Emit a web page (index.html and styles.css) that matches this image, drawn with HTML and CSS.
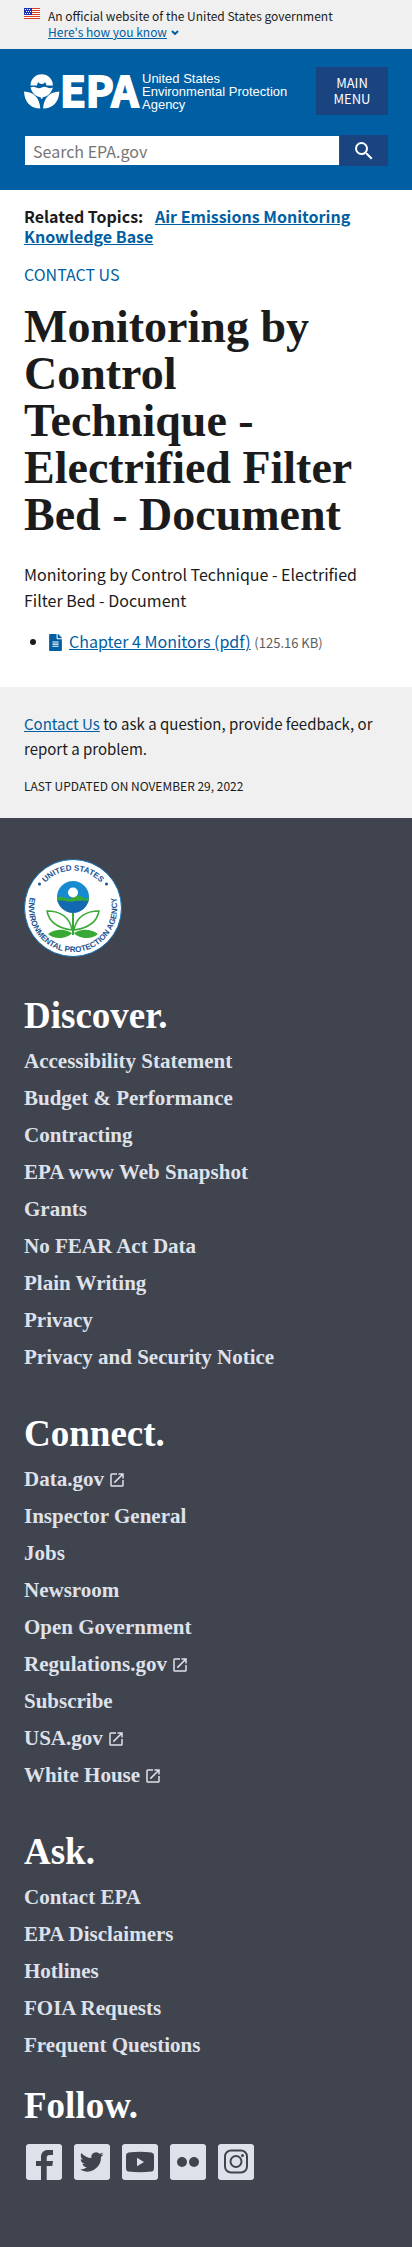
FILE: index.html
```html
<!DOCTYPE html>
<html lang="en">
<head>
<meta charset="utf-8">
<meta name="viewport" content="width=device-width, initial-scale=1">
<title>Monitoring by Control Technique - Electrified Filter Bed - Document | US EPA</title>
<link rel="stylesheet" href="styles.css">
</head>
<body>
<svg class="defs" aria-hidden="true">
  <symbol id="launch" viewBox="0 0 24 24"><path d="M19 19H5V5h7V3H5a2 2 0 0 0-2 2v14a2 2 0 0 0 2 2h14c1.100 0 2-.9 2-2v-7h-2v7zM14 3v2h3.590l-9.830 9.830 1.410 1.410L19 6.410V10h2V3h-7z"/></symbol>
</svg>

<section class="banner" aria-label="Official government website">
  <svg class="banner-flag" viewBox="0 0 16 11" aria-hidden="true">
    <path fill="#fff" d="M0 0h16v11H0z"/>
    <path stroke="#db3e1f" d="M0 .5h16M0 2.500h16M0 4.500h16M0 6.500h16M0 8.500h16M0 10.500h16"/>
    <path fill="#1e33b1" d="M0 0h8v7H0z"/>
    <path stroke="#fff" stroke-dasharray="1 1" d="M1 1.500h6M2 3.500h5M1 5.500h6"/>
  </svg>
  <div>
    <p class="banner-text">An official website of the United States government</p>
    <button class="banner-toggle" type="button"><span>Here's how you know</span><svg viewBox="0 0 8 5" aria-hidden="true"><path d="M1 1l3 3 3-3"/></svg></button>
  </div>
</section>

<header class="header">
  <div class="header-top">
    <a class="logo" href="#" aria-label="United States Environmental Protection Agency">
      <svg class="logo-mark" viewBox="0 0 114 36" aria-hidden="true">
        <path d="M6.500 12.500a11.200 11.200 0 0 1 22.400 0h-6.500a4.700 4.700 0 1 0-9.400 0z"/>
        <circle cx="17.700" cy="7.700" r="3.300"/>
        <path d="M6.500 14.500q2.800-1.300 5.600 0t5.600 0 5.600 0 5.600 0c-1.400 5.600-5.500 9.200-10.300 9.800v1.500h-1.800v-1.500C12 23.700 7.900 20.100 6.500 14.500z"/>
        <path d="M0 18.500c9.500.5 15.500 5.700 16.300 17C6 35.500.5 28.500 0 18.500zM35.400 18.500c-9.500.5-15.500 5.700-16.300 17 10.300 0 15.800-7 16.300-17z"/>
        <text class="logo-epa" x="36" y="34">EPA</text>
      </svg>
      <span class="logo-name">United States<br>Environmental Protection<br>Agency</span>
    </a>
    <button class="menu-button" type="button">Main Menu</button>
  </div>
  <form class="search" role="search">
    <input class="search-input" type="search" placeholder="Search EPA.gov" aria-label="Search EPA.gov">
    <button class="search-button" type="submit" aria-label="Search"><svg viewBox="0 0 24 24" aria-hidden="true"><path d="M15.500 14h-.79l-.28-.27A6.470 6.470 0 0 0 16 9.500 6.500 6.500 0 1 0 9.500 16c1.610 0 3.090-.59 4.230-1.570l.27.28v.79l5 4.990L20.490 19l-4.990-5zm-6 0C7.010 14 5 11.990 5 9.500S7.010 5 9.500 5 14 7.010 14 9.500 11.990 14 9.500 14z"/></svg></button>
  </form>
</header>

<main class="main">
  <p class="related">Related Topics: <a href="#">Air Emissions Monitoring Knowledge Base</a></p>
  <p class="contact"><a href="#">Contact Us</a></p>
  <h1 class="title">Monitoring by<br>Control<br>Technique -<br>Electrified Filter<br>Bed - Document</h1>
  <p class="summary">Monitoring by Control Technique - Electrified Filter Bed - Document</p>
  <ul class="files">
    <li><svg class="file-icon" viewBox="0 0 384 512" aria-hidden="true"><path d="M224 136V0H24C11 0 0 11 0 24v464c0 13 11 24 24 24h336c13 0 24-11 24-24V160H248c-13 0-24-11-24-24zm64 236c0 7-5 12-12 12H108c-7 0-12-5-12-12v-8c0-7 5-12 12-12h168c7 0 12 5 12 12zm0-64c0 7-5 12-12 12H108c-7 0-12-5-12-12v-8c0-7 5-12 12-12h168c7 0 12 5 12 12zm0-72v8c0 7-5 12-12 12H108c-7 0-12-5-12-12v-8c0-7 5-12 12-12h168c7 0 12 5 12 12zm96-114v6H256V0h6c6 0 12 3 17 7l98 98c4 5 7 11 7 17z"/></svg><a href="#">Chapter 4 Monitors (pdf)</a> <span class="file-size">(125.16 KB)</span></li>
  </ul>
</main>

<footer>
  <div class="page-info">
    <p class="feedback"><a href="#">Contact Us</a> to ask a question, provide feedback, or report a problem.</p>
    <p class="updated">Last updated on November 29, 2022</p>
  </div>
  <div class="footer">
    <svg class="seal" viewBox="0 0 98 98" role="img" aria-label="United States Environmental Protection Agency seal">
      <defs>
        <path id="arc-top" d="M11.500 49a37.500 37.500 0 0 1 75 0"/>
        <path id="arc-bottom" d="M13 23.300a44.200 44.200 0 1 0 72 0"/>
        <clipPath id="globe"><circle cx="49" cy="38" r="16"/></clipPath>
      </defs>
      <circle cx="49" cy="49" r="48.500" fill="#fff" stroke="#0e6eb4"/>
      <text class="seal-text"><textPath href="#arc-top" startOffset="50%">UNITED STATES</textPath></text>
      <text class="seal-text"><textPath href="#arc-bottom" startOffset="50%">ENVIRONMENTAL PROTECTION AGENCY</textPath></text>
      <circle cx="15.500" cy="25" r="1.500" fill="#1a5295"/><circle cx="82.500" cy="25" r="1.500" fill="#1a5295"/>
      <g clip-path="url(#globe)">
        <path fill="#168bd0" d="M32 21h34v22H32z"/>
        <path fill="#39a935" d="M32 38q5-1 9 1t9-1 8 0 8 0v5H32z"/>
        <path fill="#1269b0" d="M32 42q6-1 10 0t10 0 14 0v14H32z"/>
      </g>
      <circle cx="49" cy="33.500" r="5" fill="#fff"/>
      <path fill="#39a935" d="M48 54h2v22h-2zM24 75c8-6 18-5 24-1-5 6-18 7-24 1zM74 75c-8-6-18-5-24-1 5 6 18 7 24 1z"/>
      <path fill="#fff" stroke="#39a935" stroke-width="1.500" d="M48 71C46 58 36 52 23 52c2 11 10 17 25 19zM50 71c2-13 12-19 25-19-2 11-10 17-25 19z"/>
    </svg>

    <nav class="group" aria-labelledby="discover">
      <h2 id="discover">Discover.</h2>
      <ul>
        <li><a href="#">Accessibility Statement</a></li>
        <li><a href="#">Budget &amp; Performance</a></li>
        <li><a href="#">Contracting</a></li>
        <li><a href="#">EPA www Web Snapshot</a></li>
        <li><a href="#">Grants</a></li>
        <li><a href="#">No FEAR Act Data</a></li>
        <li><a href="#">Plain Writing</a></li>
        <li><a href="#">Privacy</a></li>
        <li><a href="#">Privacy and Security Notice</a></li>
      </ul>
    </nav>
    <nav class="group" aria-labelledby="connect">
      <h2 id="connect">Connect.</h2>
      <ul>
        <li><a href="#">Data.gov<svg aria-hidden="true"><use href="#launch"/></svg></a></li>
        <li><a href="#">Inspector General</a></li>
        <li><a href="#">Jobs</a></li>
        <li><a href="#">Newsroom</a></li>
        <li><a href="#">Open Government</a></li>
        <li><a href="#">Regulations.gov<svg aria-hidden="true"><use href="#launch"/></svg></a></li>
        <li><a href="#">Subscribe</a></li>
        <li><a href="#">USA.gov<svg aria-hidden="true"><use href="#launch"/></svg></a></li>
        <li><a href="#">White House<svg aria-hidden="true"><use href="#launch"/></svg></a></li>
      </ul>
    </nav>
    <nav class="group" aria-labelledby="ask">
      <h2 id="ask">Ask.</h2>
      <ul>
        <li><a href="#">Contact EPA</a></li>
        <li><a href="#">EPA Disclaimers</a></li>
        <li><a href="#">Hotlines</a></li>
        <li><a href="#">FOIA Requests</a></li>
        <li><a href="#">Frequent Questions</a></li>
      </ul>
    </nav>
    <section class="follow" aria-labelledby="follow">
      <h2 id="follow">Follow.</h2>
      <div class="social">
        <a href="#" aria-label="Facebook"><svg viewBox="0 0 36 36"><path d="M15 36V22h-5v-5h5v-3.500C15 8 18 6 22 6h5v5h-3c-2.500 0-3.300 1-3.300 3v3H27l-.7 5h-5.600v14z"/></svg></a>
        <a href="#" aria-label="Twitter"><svg viewBox="0 0 36 36"><path d="M29.500 10.300c-.9.400-1.800.7-2.800.8 1-.6 1.800-1.500 2.100-2.600-.9.500-2 1-3.100 1.200a4.900 4.900 0 0 0-8.300 4.400C13.400 13.900 9.800 12 7.400 9c-1.300 2.200-.7 5 1.500 6.500-.8 0-1.500-.2-2.200-.6 0 2.400 1.600 4.400 3.900 4.900-.7.200-1.500.2-2.200.1.600 1.900 2.400 3.300 4.600 3.400A9.800 9.800 0 0 1 5.700 25.300 13.800 13.800 0 0 0 27 13.100c1-.7 1.800-1.700 2.500-2.800z"/></svg></a>
        <a href="#" aria-label="YouTube"><svg viewBox="0 0 36 36"><path fill-rule="evenodd" d="M6.500 8.500Q18 7 29.500 8.500q2.500.5 2.500 3v13q0 2.500-2.500 3Q18 29 6.500 27.500q-2.500-.5-2.500-3v-13q0-2.500 2.500-3zM15 13.800v8.400l7-4.200z"/></svg></a>
        <a href="#" aria-label="Flickr"><svg viewBox="0 0 36 36"><circle cx="12" cy="18" r="5"/><circle cx="24" cy="18" r="5"/></svg></a>
        <a href="#" aria-label="Instagram"><svg viewBox="0 0 36 36"><g class="outline"><rect x="7" y="6.500" width="22" height="22" rx="6"/><circle cx="18" cy="17.500" r="5.500"/></g><circle cx="24.500" cy="11.500" r="1.500"/></svg></a>
      </div>
    </section>
  </div>
</footer>
</body>
</html>
```
FILE: styles.css
```css
:root {
  --sans: "Noto Sans CJK SC", "Noto Sans", sans-serif;
  --serif: "Liberation Serif", serif;
  --blue: #005ea2;
  --navy: #1a4480;
  --ink: #1b1b1b;
  --slate: #40444f;
  --pale: #dfe1ea;
}

*, *::before, *::after { box-sizing: border-box; }
body { margin: 0; background: #fff; color: var(--ink); font: 16px/26px var(--sans); }
p, h1, h2, ul { margin: 0; padding: 0; }
a { color: var(--blue); }
button, input { font-family: inherit; border: 0; border-radius: 0; }
svg { flex: none; }
.defs { display: none; }

.banner { display: flex; gap: 8px; padding: 8px 24px 9px; background: #f0f0f0; font-size: 12px; line-height: 16px; }
.banner-flag { width: 16px; height: 11px; }
.banner-toggle { display: flex; align-items: center; gap: 4px; padding: 0; background: none; color: var(--blue); font-size: 12px; line-height: 16px; }
.banner-toggle span { text-decoration: underline; }
.banner-toggle svg { width: 8px; height: 5px; fill: none; stroke: currentColor; stroke-width: 2; }

.header { padding: 18px 24px 24px; background: var(--blue); }
.header-top { display: flex; justify-content: space-between; align-items: center; margin-bottom: 20px; }
.logo { display: flex; align-items: center; gap: 4px; color: #fff; text-decoration: none; }
.logo-mark { width: 114px; height: 36px; overflow: visible; fill: #fff; }
.logo-epa { font: 700 42px "Noto Sans CJK SC", sans-serif; stroke: #fff; stroke-width: 2; }
.logo-name { font: 13px/13px "Liberation Sans", sans-serif; white-space: nowrap; }
.menu-button { width: 72px; padding: 8px 16px; background: var(--navy); color: #fff; font-size: 13px; line-height: 16px; text-transform: uppercase; }
.search { display: flex; }
.search-input { flex: 1; min-width: 0; height: 31px; padding: 0 8px; border: 1px solid var(--blue); background: #fff; color: var(--ink); font-size: 16px; }
.search-input::placeholder { color: #757575; opacity: 1; }
.search-button { display: grid; place-items: center; width: 48px; padding: 0; background: var(--navy); }
.search-button svg { width: 24px; height: 24px; fill: #fff; }

.main { padding: 16px 24px 33px; }
.related { font-weight: bold; line-height: 20px; }
.related a { margin-left: 8px; }
.contact { margin-top: 15px; }
.contact a { text-decoration: none; text-transform: uppercase; }
.title { margin-top: 16px; font: bold 46px/47px var(--serif); }
.summary { margin-top: 23px; }
.files { margin-top: 15px; padding-left: 25px; }
.file-icon { width: 13px; height: 17px; margin-right: 7px; vertical-align: -3px; fill: var(--blue); }
.file-size { color: #5c5c5c; font-size: 13px; line-height: 1; }

.page-info { padding: 24px 24px 20px; background: #f0f0f0; font-size: 15px; }
.feedback { line-height: 25px; }
.updated { margin-top: 12px; font-size: 12px; line-height: 25px; text-transform: uppercase; }

.footer { padding: 41px 24px 67px; background: var(--slate); color: #fff; font-family: var(--serif); }
.seal { display: block; width: 98px; height: 98px; margin-bottom: 39px; }
.seal-text { fill: #1a5295; font: bold 8px "Liberation Sans", sans-serif; text-anchor: middle; }
.footer h2 { font-size: 37px; line-height: 40px; }
.group { margin-bottom: 38px; }
.group ul { margin-top: 7px; list-style: none; }
.group a { display: flex; align-items: center; gap: 4px; color: var(--pale); font-size: 21px; font-weight: bold; line-height: 37px; text-decoration: none; }
.group svg { width: 18px; height: 18px; fill: currentColor; }
.group:nth-last-child(2) { margin-bottom: 22px; }
.social { display: flex; gap: 12px; margin: 18px 2px 0; }
.social a { width: 36px; height: 36px; border-radius: 3px; background: var(--pale); }
.social svg { display: block; fill: var(--slate); }
.outline { fill: none; stroke: var(--slate); stroke-width: 2; }
```
